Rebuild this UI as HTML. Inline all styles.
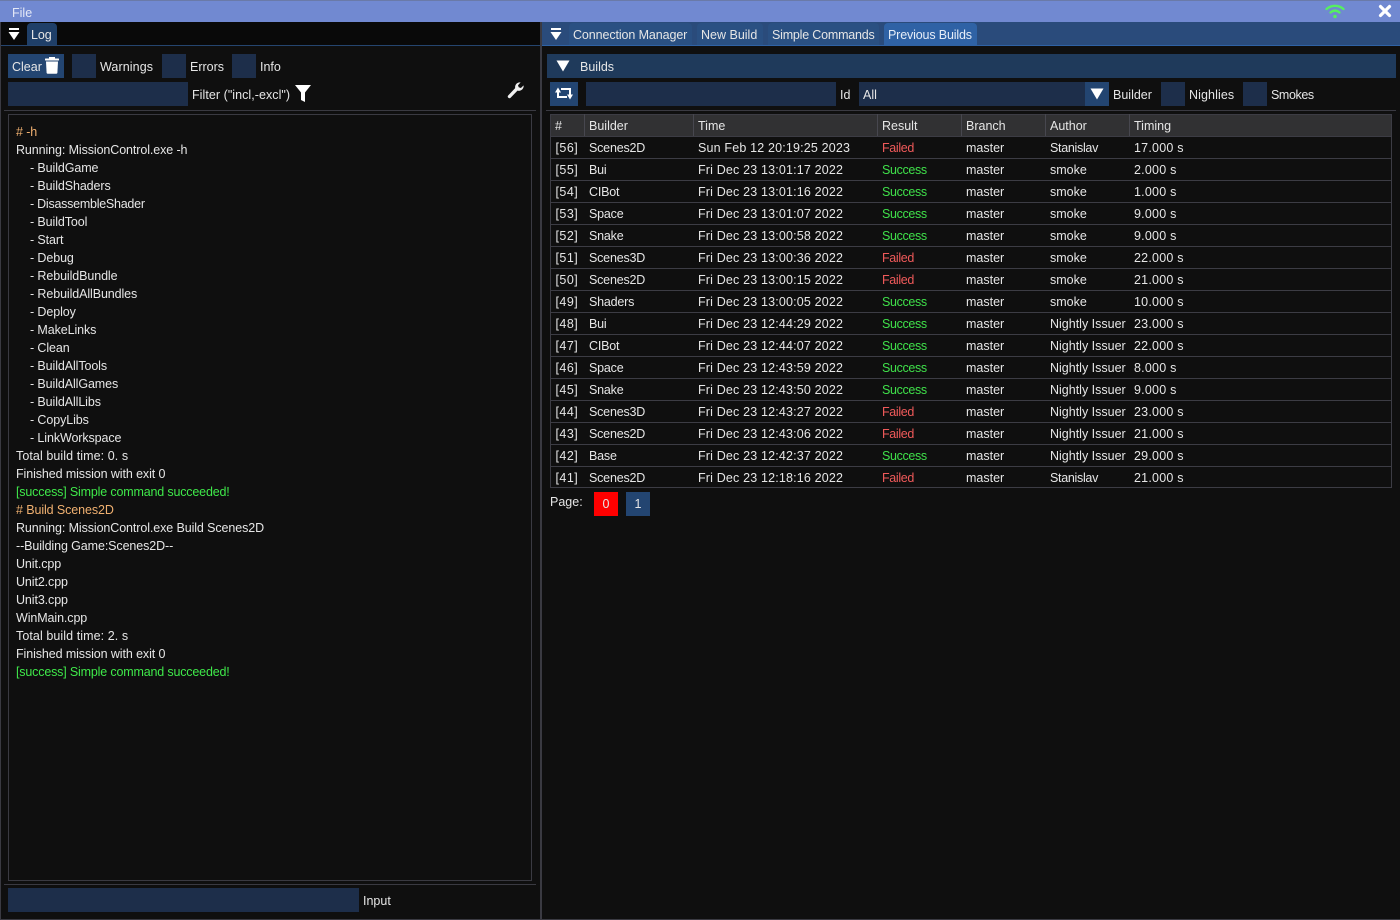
<!DOCTYPE html>
<html><head><meta charset="utf-8"><style>
*{box-sizing:border-box}
html,body{margin:0;padding:0;width:1400px;height:920px;overflow:hidden;background:#0f0f0f}
body{font-family:"Liberation Sans",sans-serif;font-size:12.5px;color:#e6e6e6;position:relative}
.a{position:absolute;white-space:nowrap}
.t{position:absolute;white-space:nowrap;line-height:18px;height:18px}
.b{position:absolute}
.inp{position:absolute;background:#1d2e4a;height:24px}
.btn{position:absolute;background:#234571;height:24px}
.tab{position:absolute;top:23px;height:22px;background:#2a5082;border-radius:4px 4px 0 0;line-height:24px;padding-left:4px;color:#e6e6e6;white-space:nowrap;letter-spacing:-.1px}
.ln{height:18px;line-height:18px;white-space:nowrap;letter-spacing:-.1px}
.i{padding-left:14px}
.d{letter-spacing:-.25px}
.p{letter-spacing:.08px}
.o{color:#f0b070}.g{color:#3fe84a;letter-spacing:-.17px}
#log{position:absolute;left:16px;top:123px}
table{position:absolute;left:550px;top:114px;width:842px;border-collapse:collapse;table-layout:fixed;border:1px solid #3c3c44}
td,th{height:22px;padding:0 0 0 4.5px;font-weight:normal;text-align:left;border-bottom:1px solid #3c3c44;white-space:nowrap;overflow:hidden;line-height:20px}
th{padding-left:4px}
tr:last-child td{height:21px;padding-top:2px;line-height:18px}
th{background:#313133;border-right:1px solid #47474f}
th:last-child{border-right:0}
td:nth-child(1){letter-spacing:.45px}
td:nth-child(2){letter-spacing:-.2px}
td:nth-child(3){letter-spacing:.17px}
td:nth-child(4){letter-spacing:-.35px}
td:nth-child(7){letter-spacing:.22px}
.f{color:#f05a5a}.s{color:#3fe04a}
</style></head><body>
<div class="b" style="left:0;top:0;width:1400px;height:22px;background:#7189d1;border-top:1px solid #6a7aa8"></div>
<div class="t" style="left:12px;top:4px;color:#e4e8f6">File</div>
<svg class="b" style="left:1324px;top:3px" width="22" height="16" viewBox="0 0 22 16" fill="none" stroke="#55f060" stroke-width="2.4" stroke-linecap="round"><path d="M2.5 6C7.5 1.8 14.5 1.8 19.5 6"/><path d="M6.5 9.5C9.5 7 12.5 7 15.5 9.5"/><circle cx="11" cy="13.5" r="1.8" fill="#55f060" stroke="none"/></svg>
<svg class="b" style="left:1378px;top:4px" width="14" height="14" viewBox="0 0 14 14" stroke="#fff" stroke-width="3.2" stroke-linecap="round"><path d="M2.5 2.5L11.5 11.5M11.5 2.5L2.5 11.5"/></svg>

<!-- left dock tabs -->
<div class="b" style="left:0;top:22px;width:540px;height:23px;background:#090909"></div>
<div class="b" style="left:1px;top:45px;width:539px;height:1px;background:#25456f"></div>
<svg class="b" style="left:8px;top:28px" width="12" height="13" viewBox="0 0 12 13" fill="#fff"><rect x="1" y="0" width="10" height="2"/><path d="M0.5 4H11.5L6 12z"/></svg>
<div class="tab" style="left:27px;width:30px;background:#1f3f68">Log</div>

<!-- right dock tabs -->
<div class="b" style="left:542px;top:22px;width:858px;height:23px;background:#2a4b7b"></div>
<div class="b" style="left:542px;top:45px;width:858px;height:1px;background:#2f62a5"></div>
<svg class="b" style="left:550px;top:28px" width="12" height="13" viewBox="0 0 12 13" fill="#fff"><rect x="1" y="0" width="10" height="2"/><path d="M0.5 4H11.5L6 12z"/></svg>
<div class="tab" style="left:569px;width:123px;">Connection Manager</div>
<div class="tab" style="left:697px;width:66px;letter-spacing:0">New Build</div>
<div class="tab" style="left:768px;width:111px;letter-spacing:-.2px">Simple Commands</div>
<div class="tab" style="left:884px;width:93px;background:#2f62a5;color:#e6edf8;letter-spacing:-.15px">Previous Builds</div>

<!-- divider / frame -->
<div class="b" style="left:540px;top:22px;width:2px;height:898px;background:#3a3a42"></div>
<div class="b" style="left:0;top:22px;width:1px;height:898px;background:#3a3a42"></div>
<div class="b" style="left:0;top:919px;width:1400px;height:1px;background:#3a3a42"></div>

<!-- log toolbar -->
<div class="btn" style="left:8px;top:54px;width:56px"></div>
<div class="t" style="left:12px;top:58px">Clear</div>
<svg class="b" style="left:45px;top:57px" width="14" height="17" viewBox="0 0 14 17" fill="#fff"><rect x="0" y="1.5" width="14" height="2" rx="0.5"/><rect x="4" y="0" width="6" height="2"/><path d="M1 4.5H13L12.4 15.8Q12.3 16.8 11.3 16.8H2.7Q1.7 16.8 1.6 15.8z"/></svg>
<div class="inp" style="left:72px;top:54px;width:24px"></div>
<div class="t" style="left:100px;top:58px;letter-spacing:.1px">Warnings</div>
<div class="inp" style="left:162px;top:54px;width:24px"></div>
<div class="t" style="left:190px;top:58px">Errors</div>
<div class="inp" style="left:232px;top:54px;width:24px"></div>
<div class="t" style="left:260px;top:58px">Info</div>
<div class="inp" style="left:8px;top:82px;width:180px"></div>
<div class="t" style="left:192px;top:86px;letter-spacing:.05px">Filter ("incl,-excl")</div>
<svg class="b" style="left:295px;top:85px" width="16" height="17" viewBox="0 0 16 17" fill="#fff"><path d="M0 0H16L10 7.5V17L6 15V7.5z"/></svg>
<svg class="b" style="left:507px;top:81px" width="18" height="18" viewBox="0 0 18 18"><path d="M2.5 15.5L9.5 8.2" stroke="#f0f0f0" stroke-width="3.4" stroke-linecap="round" fill="none"/><path d="M8.2 7.2C7.6 4 10 1 13.6 1.4L11 4.2 11.7 6.3 13.9 7 16.6 4.4C17 7.6 14.2 10.4 10.8 9.8z" fill="#f0f0f0"/></svg>
<div class="b" style="left:4px;top:110px;width:532px;height:1px;background:#3a3a42"></div>
<div class="b" style="left:8px;top:114px;width:524px;height:767px;border:1px solid #3a3a42"></div>

<div id="log">
<div class="ln o"># -h</div>
<div class="ln">Running: MissionControl.exe -h</div>
<div class="ln i">- BuildGame</div>
<div class="ln i">- BuildShaders</div>
<div class="ln i d">- DisassembleShader</div>
<div class="ln i">- BuildTool</div>
<div class="ln i">- Start</div>
<div class="ln i">- Debug</div>
<div class="ln i">- RebuildBundle</div>
<div class="ln i">- RebuildAllBundles</div>
<div class="ln i">- Deploy</div>
<div class="ln i">- MakeLinks</div>
<div class="ln i">- Clean</div>
<div class="ln i">- BuildAllTools</div>
<div class="ln i">- BuildAllGames</div>
<div class="ln i">- BuildAllLibs</div>
<div class="ln i">- CopyLibs</div>
<div class="ln i">- LinkWorkspace</div>
<div class="ln p">Total build time: 0. s</div>
<div class="ln">Finished mission with exit 0</div>
<div class="ln g">[success] Simple command succeeded!</div>
<div class="ln o"># Build Scenes2D</div>
<div class="ln">Running: MissionControl.exe Build Scenes2D</div>
<div class="ln">--Building Game:Scenes2D--</div>
<div class="ln">Unit.cpp</div>
<div class="ln">Unit2.cpp</div>
<div class="ln">Unit3.cpp</div>
<div class="ln">WinMain.cpp</div>
<div class="ln p">Total build time: 2. s</div>
<div class="ln">Finished mission with exit 0</div>
<div class="ln g">[success] Simple command succeeded!</div>
</div>

<div class="b" style="left:4px;top:884px;width:532px;height:1px;background:#3a3a42"></div>
<div class="inp" style="left:8px;top:888px;width:351px"></div>
<div class="t" style="left:363px;top:892px">Input</div>

<!-- right panel -->
<div class="b" style="left:547px;top:54px;width:849px;height:24px;background:#1f3a5b"></div>
<svg class="b" style="left:556px;top:60px" width="14" height="12" viewBox="0 0 14 12" fill="#fff"><path d="M0.5 0.5H13.5L7 11.5z"/></svg>
<div class="t" style="left:580px;top:58px">Builds</div>
<div class="btn" style="left:550px;top:82px;width:28px"></div>
<svg class="b" style="left:555px;top:87px" width="18" height="13" viewBox="0 0 18 13" fill="none" stroke="#fff" stroke-width="2"><path d="M3 3.5V10H12"/><path d="M6 2H15V9"/><path d="M0 5.5L3 0.5L6 5.5z" fill="#fff" stroke="none"/><path d="M12 7.5L15 12.5L18 7.5z" fill="#fff" stroke="none"/></svg>
<div class="inp" style="left:586px;top:82px;width:250px"></div>
<div class="t" style="left:840px;top:86px">Id</div>
<div class="inp" style="left:859px;top:82px;width:226px"></div>
<div class="t" style="left:863px;top:86px">All</div>
<div class="btn" style="left:1085px;top:82px;width:24px"></div>
<svg class="b" style="left:1090px;top:88px" width="14" height="12" viewBox="0 0 14 12" fill="#fff"><path d="M0.5 0.5H13.5L7 11.5z"/></svg>
<div class="t" style="left:1113px;top:86px">Builder</div>
<div class="inp" style="left:1161px;top:82px;width:24px"></div>
<div class="t" style="left:1189px;top:86px;letter-spacing:.1px">Nighlies</div>
<div class="inp" style="left:1243px;top:82px;width:24px"></div>
<div class="t" style="left:1271px;top:86px;letter-spacing:-.4px">Smokes</div>
<div class="b" style="left:546px;top:110px;width:850px;height:1px;background:#3a3a42"></div>

<table>
<colgroup><col style="width:34px"><col style="width:109px"><col style="width:184px"><col style="width:84px"><col style="width:84px"><col style="width:84px"><col></colgroup>
<tr><th>#</th><th>Builder</th><th>Time</th><th>Result</th><th>Branch</th><th>Author</th><th>Timing</th></tr>
<tr><td>[56]</td><td>Scenes2D</td><td>Sun Feb 12 20:19:25 2023</td><td class="f">Failed</td><td>master</td><td style="letter-spacing:-.3px">Stanislav</td><td>17.000 s</td></tr>
<tr><td>[55]</td><td>Bui</td><td>Fri Dec 23 13:01:17 2022</td><td class="s">Success</td><td>master</td><td>smoke</td><td>2.000 s</td></tr>
<tr><td>[54]</td><td>CIBot</td><td>Fri Dec 23 13:01:16 2022</td><td class="s">Success</td><td>master</td><td>smoke</td><td>1.000 s</td></tr>
<tr><td>[53]</td><td>Space</td><td>Fri Dec 23 13:01:07 2022</td><td class="s">Success</td><td>master</td><td>smoke</td><td>9.000 s</td></tr>
<tr><td>[52]</td><td>Snake</td><td>Fri Dec 23 13:00:58 2022</td><td class="s">Success</td><td>master</td><td>smoke</td><td>9.000 s</td></tr>
<tr><td>[51]</td><td>Scenes3D</td><td>Fri Dec 23 13:00:36 2022</td><td class="f">Failed</td><td>master</td><td>smoke</td><td>22.000 s</td></tr>
<tr><td>[50]</td><td>Scenes2D</td><td>Fri Dec 23 13:00:15 2022</td><td class="f">Failed</td><td>master</td><td>smoke</td><td>21.000 s</td></tr>
<tr><td>[49]</td><td>Shaders</td><td>Fri Dec 23 13:00:05 2022</td><td class="s">Success</td><td>master</td><td>smoke</td><td>10.000 s</td></tr>
<tr><td>[48]</td><td>Bui</td><td>Fri Dec 23 12:44:29 2022</td><td class="s">Success</td><td>master</td><td>Nightly Issuer</td><td>23.000 s</td></tr>
<tr><td>[47]</td><td>CIBot</td><td>Fri Dec 23 12:44:07 2022</td><td class="s">Success</td><td>master</td><td>Nightly Issuer</td><td>22.000 s</td></tr>
<tr><td>[46]</td><td>Space</td><td>Fri Dec 23 12:43:59 2022</td><td class="s">Success</td><td>master</td><td>Nightly Issuer</td><td>8.000 s</td></tr>
<tr><td>[45]</td><td>Snake</td><td>Fri Dec 23 12:43:50 2022</td><td class="s">Success</td><td>master</td><td>Nightly Issuer</td><td>9.000 s</td></tr>
<tr><td>[44]</td><td>Scenes3D</td><td>Fri Dec 23 12:43:27 2022</td><td class="f">Failed</td><td>master</td><td>Nightly Issuer</td><td>23.000 s</td></tr>
<tr><td>[43]</td><td>Scenes2D</td><td>Fri Dec 23 12:43:06 2022</td><td class="f">Failed</td><td>master</td><td>Nightly Issuer</td><td>21.000 s</td></tr>
<tr><td>[42]</td><td>Base</td><td>Fri Dec 23 12:42:37 2022</td><td class="s">Success</td><td>master</td><td>Nightly Issuer</td><td>29.000 s</td></tr>
<tr><td>[41]</td><td>Scenes2D</td><td>Fri Dec 23 12:18:16 2022</td><td class="f">Failed</td><td>master</td><td style="letter-spacing:-.3px">Stanislav</td><td>21.000 s</td></tr>
</table>

<div class="t" style="left:550px;top:493px">Page:</div>
<div class="btn" style="left:594px;top:492px;width:24px;background:#ff0000;text-align:center;line-height:25px">0</div>
<div class="btn" style="left:626px;top:492px;width:24px;text-align:center;line-height:25px">1</div>
</body></html>
